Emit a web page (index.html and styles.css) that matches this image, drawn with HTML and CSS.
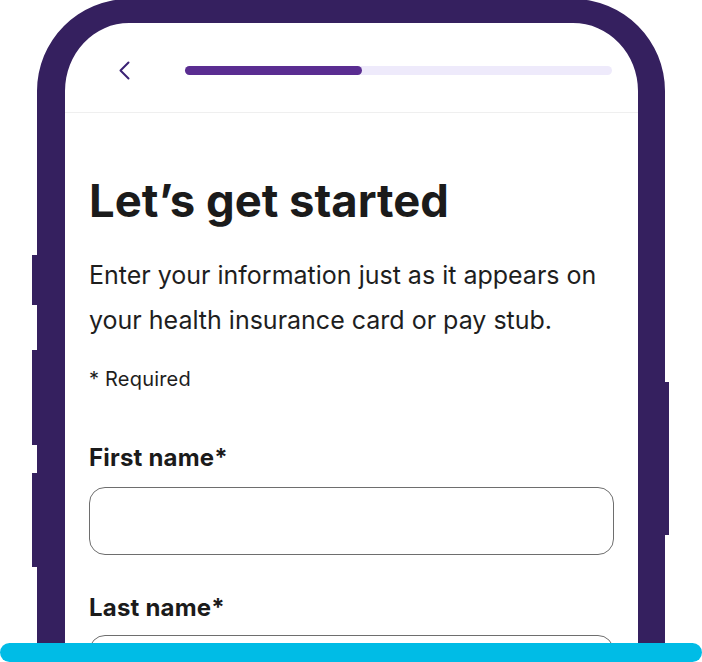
FILE: index.html
```html
<!DOCTYPE html>
<html lang="en">
<head>
<meta charset="utf-8">
<title>Let’s get started</title>
<link rel="stylesheet" href="styles.css">
</head>
<body>
<div class="stage">
  <div class="phone">
    <span class="side-btn btn-l1"></span>
    <span class="side-btn btn-l2"></span>
    <span class="side-btn btn-l3"></span>
    <span class="side-btn btn-r1"></span>
    <div class="screen">
      <header class="topbar">
        <svg class="back" width="12" height="19" viewBox="0 0 12 19" aria-label="Back">
          <path d="M10.5 1.5 L2.5 9.5 L10.5 17.5" fill="none" stroke="#3a2174" stroke-width="2" stroke-linecap="round" stroke-linejoin="round"/>
        </svg>
        <div class="progress"><div class="progress-fill"></div></div>
      </header>
      <main class="content">
        <h1 class="title">Let’s get started</h1>
        <p class="lead">Enter your information just as it appears on your health insurance card or pay stub.</p>
        <p class="req">* Required</p>
        <div class="field">
          <label class="label">First name*</label>
          <div class="input"></div>
        </div>
        <div class="field field-next">
          <label class="label">Last name*</label>
          <div class="input"></div>
        </div>
      </main>
    </div>
  </div>
  <div class="dock"></div>
</div>
</body>
</html>
```

FILE: styles.css
```css
* { box-sizing: border-box; }
html, body {
  margin: 0;
  padding: 0;
  background: #ffffff;
}
.stage {
  position: relative;
  width: 702px;
  height: 662px;
  overflow: hidden;
  font-family: "Inter", "Lato", sans-serif;
  color: #1c1c1c;
}
.phone {
  position: relative;
  margin: -1px 0 0 37px;
  width: 628px;
  height: 900px;
  border: 28px solid #35205f;
  border-right-width: 27px;
  border-top-width: 24px;
  border-radius: 92px;
  background: #ffffff;
}
.side-btn {
  position: absolute;
  width: 5px;
  background: #35205f;
}
.btn-l1 { left: -33px; top: 232px; height: 50px; }
.btn-l2 { left: -33px; top: 327px; height: 95px; }
.btn-l3 { left: -33px; top: 450px; height: 94px; }
.btn-r1 { right: -31px; top: 359px; height: 153px; }
.screen {
  display: flex;
  flex-direction: column;
  height: 100%;
  border-radius: 64px 64px 0 0;
  overflow: hidden;
}
.topbar {
  display: flex;
  align-items: center;
  height: 90px;
  padding: 6px 26px 0 53px;
  border-bottom: 1px solid #efefef;
}
.back {
  display: block;
  flex: none;
}
.progress {
  flex: 1;
  height: 9px;
  margin-left: 55px;
  border-radius: 5px;
  background: #eeeafb;
}
.progress-fill {
  width: 177px;
  height: 100%;
  border-radius: 5px;
  background: #5a2d91;
}
.content {
  padding: 0 24px;
}
.title {
  margin: 60px 0 0;
  font-size: 45.4px;
  line-height: 56px;
  font-weight: 700;
  color: #1b1b1b;
}
.lead {
  margin: 24px 0 0;
  font-size: 25px;
  line-height: 45px;
  font-weight: 400;
  color: #1e1e1e;
}
.req {
  margin: 22px 0 0;
  font-size: 20px;
  line-height: 28px;
  letter-spacing: 0.2px;
  color: #1e1e1e;
}
.field {
  margin-top: 50px;
}
.field-next {
  margin-top: 38px;
}
.label {
  display: block;
  font-size: 24px;
  line-height: 30px;
  font-weight: 700;
  letter-spacing: 0.2px;
  color: #1b1b1b;
}
.input {
  margin-top: 14px;
  height: 68px;
  border: 1.6px solid #6e6e6e;
  border-radius: 16px;
  background: #ffffff;
}
.field-next .input {
  margin-top: 12px;
}
.dock {
  position: absolute;
  left: 0;
  right: 0;
  bottom: 0;
  height: 19px;
  border-radius: 10px;
  background: #00bce6;
}
```
